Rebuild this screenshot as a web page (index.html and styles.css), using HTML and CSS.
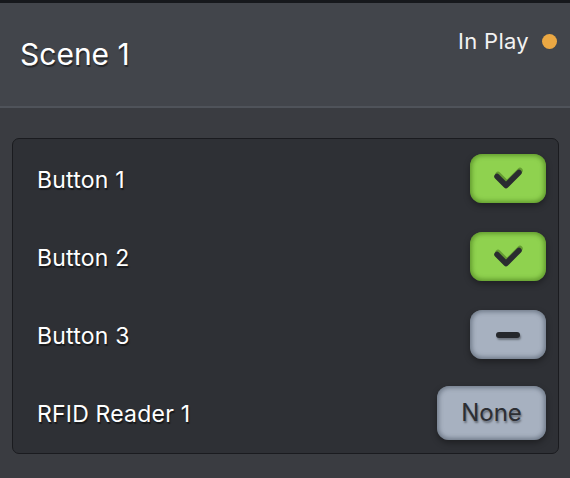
FILE: index.html
```html
<!DOCTYPE html>
<html>
<head>
<meta charset="utf-8">
<link rel="stylesheet" href="styles.css">
</head>
<body>
<div class="topstrip"></div>
<header class="header">
  <h1 class="title">Scene 1</h1>
  <div class="status"><span class="status-text">In Play</span><span class="dot"></span></div>
</header>
<main class="content">
  <section class="panel">
    <div class="row">
      <span class="label">Button 1</span>
      <button class="btn btn-green"><svg width="30" height="24" viewBox="0 0 30 24"><path class="chk-sh" d="M5 7.5 L14 16.5 L27 3.5" /><path class="chk" d="M4 9.5 L13 18.5 L26 5.5" /></svg></button>
    </div>
    <div class="row">
      <span class="label">Button 2</span>
      <button class="btn btn-green"><svg width="30" height="24" viewBox="0 0 30 24"><path class="chk-sh" d="M5 7.5 L14 16.5 L27 3.5" /><path class="chk" d="M4 9.5 L13 18.5 L26 5.5" /></svg></button>
    </div>
    <div class="row">
      <span class="label">Button 3</span>
      <button class="btn btn-gray"><span class="dash"></span></button>
    </div>
    <div class="row">
      <span class="label">RFID Reader 1</span>
      <button class="btn btn-gray btn-text">None</button>
    </div>
  </section>
</main>
</body>
</html>
```
FILE: styles.css
```css
* { box-sizing: border-box; }
html, body { margin: 0; padding: 0; }
body {
  width: 570px;
  height: 478px;
  background: #3a3c41;
  font-family: Inter, "Noto Sans", sans-serif;
  overflow: hidden;
}
.topstrip { height: 3px; background: #16181c; }
.header {
  height: 105px;
  background: #42454b;
  border-bottom: 2px solid #4f535a;
  display: flex;
  justify-content: space-between;
  align-items: flex-start;
  padding: 0 13px 0 20px;
}
.title {
  margin: 31px 0 0 0;
  font-size: 30px;
  font-weight: 400;
  color: #ffffff;
  text-shadow: 1px 2px 1px rgba(0,0,0,0.45);
  line-height: 40px;
}
.status {
  margin-top: 23px;
  display: flex;
  align-items: center;
  gap: 13px;
}
.status-text {
  font-size: 22px;
  color: #f2f2f2;
  line-height: 30px;
  letter-spacing: 0.3px;
}
.dot {
  width: 15px; height: 15px;
  border-radius: 50%;
  background: #eba843;
}
.content { padding: 30px 11px 0 12px; }
.panel {
  background: #2e3035;
  border: 1px solid #1a1b1f;
  border-radius: 7px;
  height: 316px;
  padding: 15px 12px 15px 24px;
  display: flex;
  flex-direction: column;
  gap: 29px;
}
.row {
  height: 49px;
  display: flex;
  align-items: center;
  justify-content: space-between;
}
.label {
  font-size: 23px;
  color: #ffffff;
  text-shadow: 1px 2px 1px rgba(0,0,0,0.5);
  letter-spacing: 0.2px;
  padding-top: 3px;
}
.btn {
  border: none;
  padding: 0;
  width: 76px;
  height: 49px;
  border-radius: 12px;
  display: flex;
  align-items: center;
  justify-content: center;
  font-family: inherit;
  flex-shrink: 0;
}
.btn-green {
  background: #8fd24f;
  box-shadow: inset 0 0 4px 2px rgba(60,110,20,0.55), 0 3px 6px rgba(0,0,0,0.35);
}
.btn-gray {
  background: #a7b1c0;
  box-shadow: inset 0 0 4px 2px rgba(70,80,95,0.55), 0 3px 6px rgba(0,0,0,0.35);
}
.btn-text {
  width: 109px;
  height: 54px;
  font-size: 24px;
  color: #2c2e33;
  text-shadow: 1px 2px 2px rgba(0,0,0,0.4);
}
.chk { fill: none; stroke: #2a2c30; stroke-width: 5.5; stroke-linecap: round; stroke-linejoin: round; }
.chk-sh { fill: none; stroke: rgba(50,90,15,0.45); stroke-width: 5.5; stroke-linecap: round; stroke-linejoin: round; }
.dash {
  width: 24px;
  height: 6px;
  border-radius: 3px;
  background: #26282c;
  box-shadow: 1px 2px 2px rgba(0,0,0,0.35);
}
```
